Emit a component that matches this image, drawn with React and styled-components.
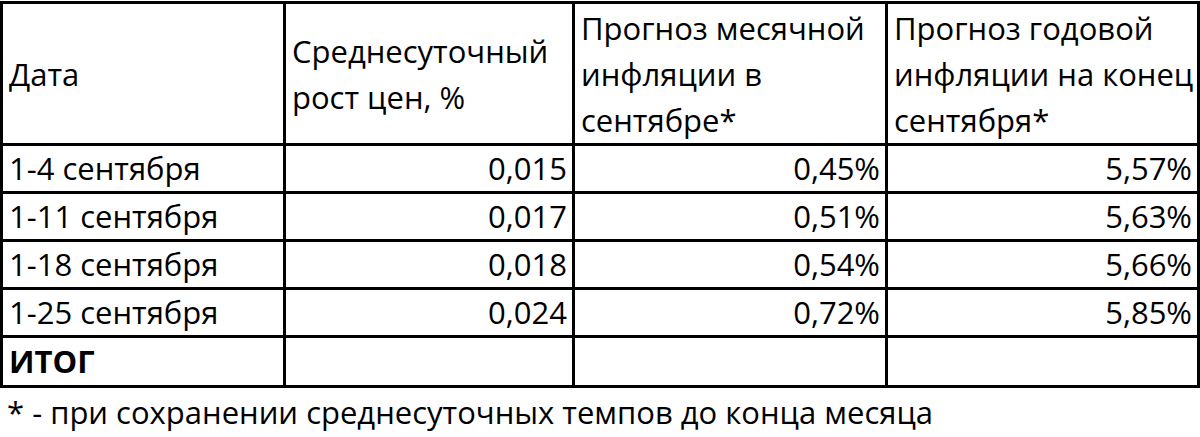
import React from "react";
import styled, { createGlobalStyle } from "styled-components";

const rows = [
  { date: "1-4 сентября", daily: "0,015", month: "0,45%", year: "5,57%" },
  { date: "1-11 сентября", daily: "0,017", month: "0,51%", year: "5,63%" },
  { date: "1-18 сентября", daily: "0,018", month: "0,54%", year: "5,66%" },
  { date: "1-25 сентября", daily: "0,024", month: "0,72%", year: "5,85%" },
];

const GlobalStyle = createGlobalStyle`
  body {
    margin: 0;
    background: #fff;
    font-family: "Open Sans", "Noto Sans", sans-serif;
    color: #000;
  }
`;

const Page = styled.div`
  width: 1200px;
  height: 437px;
  overflow: hidden;
`;

const Table = styled.table`
  border-collapse: collapse;
  table-layout: fixed;
  width: 1197px;
  margin-top: 1px;
  font-size: 31px;
`;

const Col = styled.col`
  width: ${(p) => p.$w}px;
`;

const HeadCell = styled.th`
  border: 3px solid #000;
  font-weight: 400;
  text-align: left;
  vertical-align: middle;
  line-height: 46px;
  height: 139px;
  padding: 0 6px;
  white-space: nowrap;
`;

const Cell = styled.td`
  border: 3px solid #000;
  height: 45px;
  padding: 0 ${(p) => (p.$right ? "5px" : "6px")};
  text-align: ${(p) => (p.$right ? "right" : "left")};
  font-weight: ${(p) => (p.$bold ? 700 : 400)};
  line-height: 45px;
  white-space: nowrap;
`;

const TotalCell = styled(Cell)`
  height: 47px;
`;

const Note = styled.div`
  font-size: 31px;
  padding: 5px 0 0 7px;
  line-height: 38px;
  white-space: nowrap;
`;

export default function App() {
  return (
    <Page>
      <GlobalStyle />
      <Table>
        <colgroup>
          <Col $w={283} />
          <Col $w={289} />
          <Col $w={313} />
          <Col $w={312} />
        </colgroup>
        <thead>
          <tr>
            <HeadCell>Дата</HeadCell>
            <HeadCell>
              Среднесуточный
              <br />
              рост цен, %
            </HeadCell>
            <HeadCell>
              Прогноз месячной
              <br />
              инфляции в
              <br />
              сентябре*
            </HeadCell>
            <HeadCell>
              Прогноз годовой
              <br />
              инфляции на конец
              <br />
              сентября*
            </HeadCell>
          </tr>
        </thead>
        <tbody>
          {rows.map((r) => (
            <tr key={r.date}>
              <Cell>{r.date}</Cell>
              <Cell $right>{r.daily}</Cell>
              <Cell $right>{r.month}</Cell>
              <Cell $right>{r.year}</Cell>
            </tr>
          ))}
          <tr>
            <TotalCell $bold>ИТОГ</TotalCell>
            <TotalCell />
            <TotalCell />
            <TotalCell />
          </tr>
        </tbody>
      </Table>
      <Note>* - при сохранении среднесуточных темпов до конца месяца</Note>
    </Page>
  );
}
